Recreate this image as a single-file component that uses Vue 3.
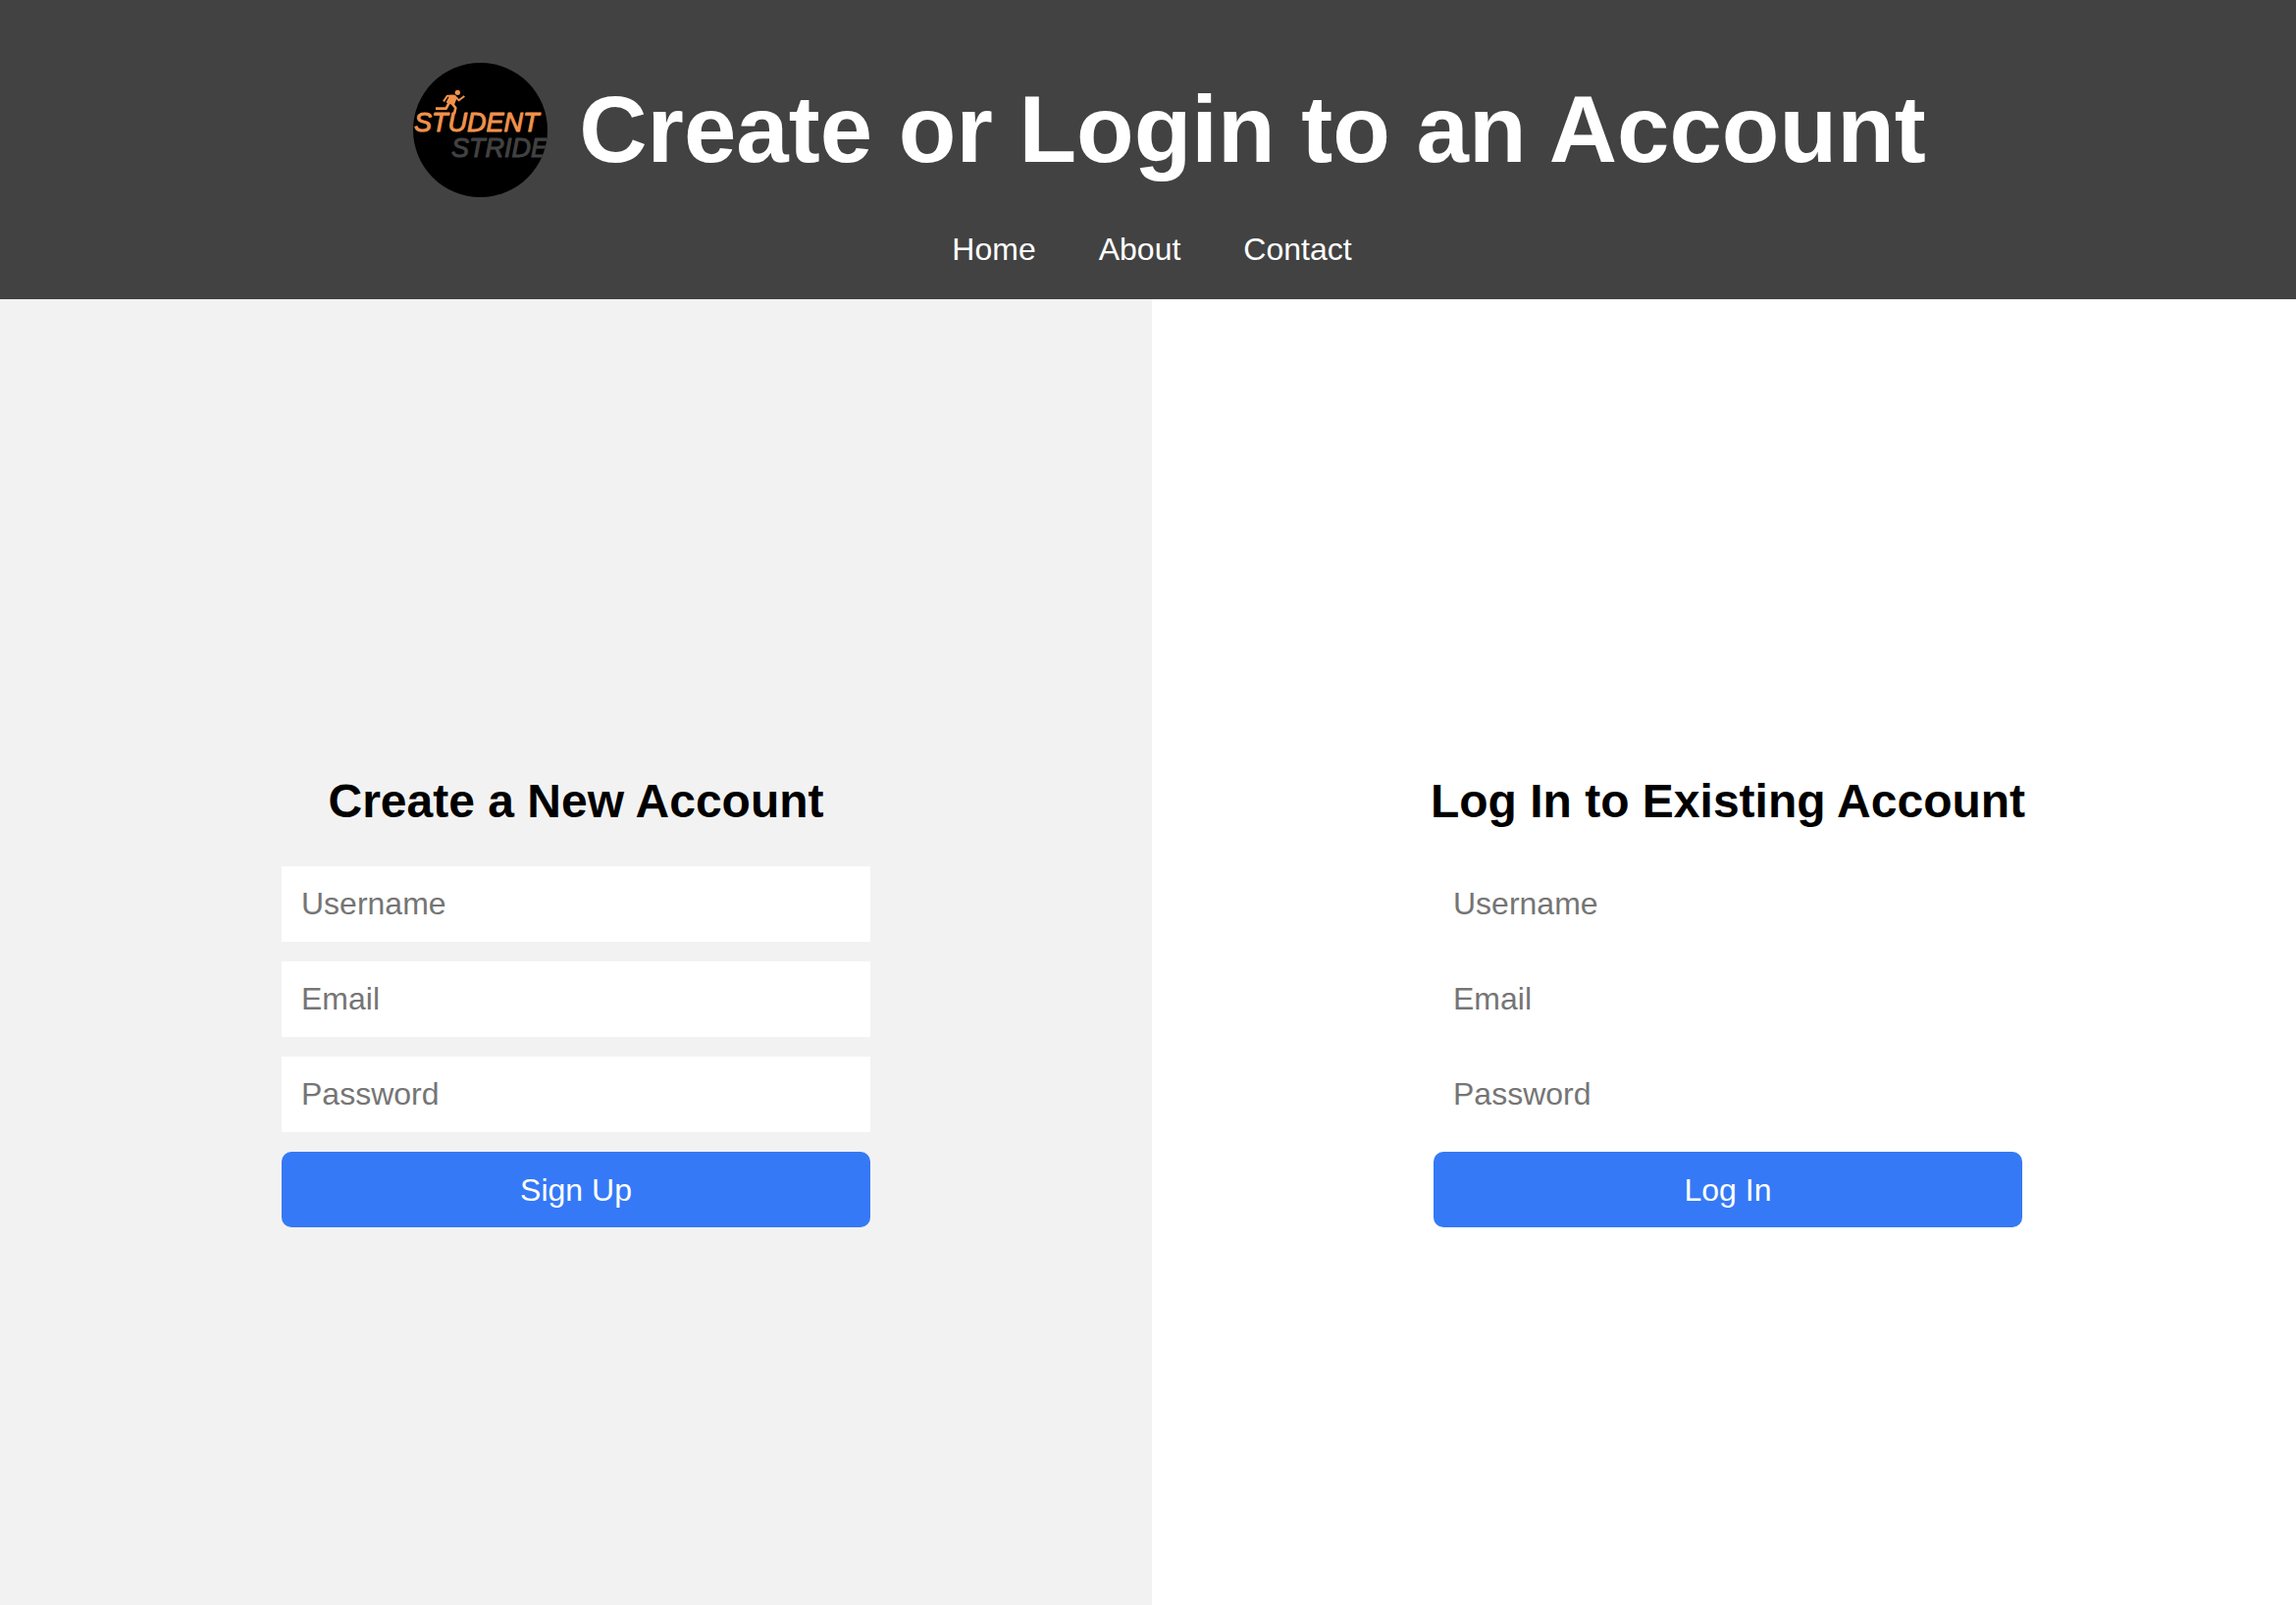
<script setup>
const links = ['Home', 'About', 'Contact']
const panels = [
  { id: 'signup', title: 'Create a New Account', action: 'Sign Up', muted: true },
  { id: 'login', title: 'Log In to Existing Account', action: 'Log In', muted: false }
]
const fields = [
  { name: 'Username', type: 'text' },
  { name: 'Email', type: 'email' },
  { name: 'Password', type: 'password' }
]
</script>

<template>
  <div class="page">
    <div class="canvas">
      <header class="header">
        <div class="brand">
          <svg class="logo" viewBox="0 0 137 137" role="img" aria-label="Student Stride">
            <defs>
              <clipPath id="badge"><circle cx="68.5" cy="68.5" r="68.5" /></clipPath>
            </defs>
            <g clip-path="url(#badge)">
              <rect width="137" height="137" fill="#000" />
              <text class="mark student" x="1" y="70">STUDENT</text>
              <text class="mark stride" x="39" y="96">STRIDE</text>
              <g class="runner" transform="translate(-11 -14) scale(0.3333)">
                <circle cx="169" cy="133" r="8" />
                <path d="M146 140 H158 L167 150 L159 170 L142 168 L134 163 Z" />
                <path class="limb" d="M126 160 L138 143 H160 L173 157 L190 144" />
                <path class="limb leg" d="M142 166 L134 182 H102 M152 166 L163 180 L159 198" />
              </g>
            </g>
          </svg>
          <h1>Create or Login to an Account</h1>
        </div>
        <nav class="nav">
          <a v-for="link in links" :key="link" href="#">{{ link }}</a>
        </nav>
      </header>
      <main class="panels">
        <section v-for="p in panels" :key="p.id" class="panel" :class="{ muted: p.muted }">
          <form class="form" @submit.prevent>
            <h2>{{ p.title }}</h2>
            <input
              v-for="f in fields"
              :key="f.name"
              :type="f.type"
              :name="f.name"
              :placeholder="f.name"
              :aria-label="f.name"
            />
            <button type="submit">{{ p.action }}</button>
          </form>
        </section>
      </main>
    </div>
  </div>
</template>

<style>
body {
  margin: 0;
  background: #fff;
}
</style>

<style scoped>
.page {
  overflow: hidden;
  font-family: "Liberation Sans", Arial, sans-serif;
  font-size: 32px;
  line-height: 36px;
  color: #000;
}
.canvas {
  display: flex;
  flex-direction: column;
  width: calc(100% + 8px);
  min-height: 100vh;
}
.header {
  display: flex;
  flex-direction: column;
  gap: 35px;
  padding: 64px 0 33px;
  background: #424242;
  color: #fff;
}
.brand {
  display: flex;
  align-items: center;
  justify-content: center;
  gap: 32px;
  padding-left: 36px;
}
.logo {
  width: 137px;
  height: 137px;
}
.mark {
  font-size: 27px;
  font-style: italic;
  stroke-width: 1px;
  stroke-linejoin: round;
}
.student {
  fill: #f0924c;
  stroke: #f0924c;
}
.stride {
  fill: #424242;
  stroke: #424242;
}
.runner {
  fill: #f0924c;
}
.limb {
  fill: none;
  stroke: #f0924c;
  stroke-width: 6px;
  stroke-linejoin: round;
}
.leg {
  stroke-width: 8px;
}
h1 {
  margin: 0;
  font-size: 96px;
  line-height: 108px;
  padding-bottom: 2px;
}
.nav {
  display: flex;
  justify-content: center;
  gap: 64px;
}
.nav a {
  color: inherit;
  text-decoration: none;
}
.panels {
  flex: 1;
  display: grid;
  grid-template-columns: 1fr 1fr;
}
.panel {
  display: flex;
  align-items: center;
  justify-content: center;
  padding-top: 99px;
}
.muted {
  background: #f2f2f2;
}
.form {
  display: flex;
  flex-direction: column;
  gap: 20px;
  width: 600px;
}
h2 {
  margin: 0 -20px 18px;
  font-size: 48px;
  line-height: 56px;
  text-align: center;
}
input,
button {
  box-sizing: border-box;
  width: 100%;
  height: 77px;
  padding: 20px;
  border: 0;
  font: inherit;
}
input {
  background: #fff;
}
input::placeholder {
  color: #757575;
}
button {
  border-radius: 10px;
  background: #3579f6;
  color: #fff;
}
</style>
